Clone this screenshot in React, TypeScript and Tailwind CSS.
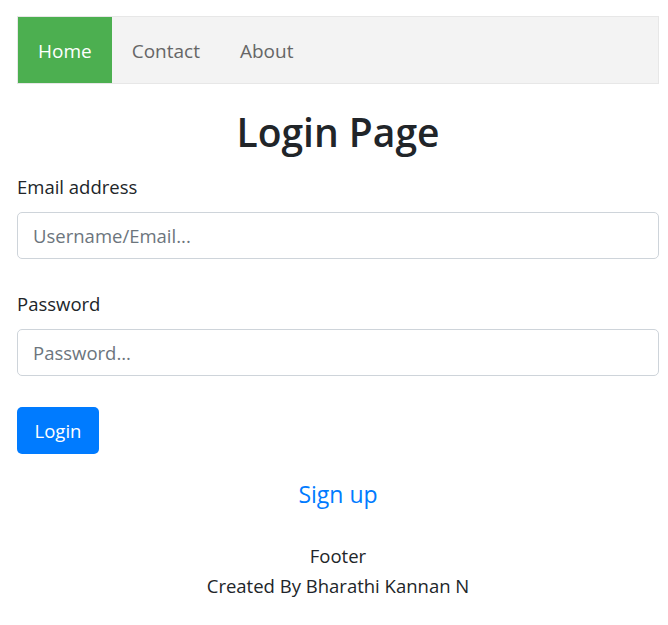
import React from "react";

export default function App() {
  return (
    <div
      className="min-h-[625px] bg-white pl-[17px] pr-[9px] pt-[16px] text-[#212529]"
      style={{ fontFamily: '"Open Sans", "Noto Sans", sans-serif' }}
    >
      <nav className="flex h-[68px] border border-[#e7e7e7] bg-[#f3f3f3]">
        <a className="flex items-center bg-[#4caf50] px-[20px] pt-[2px] text-[19px] text-white">Home</a>
        <a className="flex items-center px-[20px] pt-[2px] text-[19px] text-[#666666]">Contact</a>
        <a className="flex items-center px-[20px] pt-[2px] text-[19px] text-[#666666]">About</a>
      </nav>
      <h1 className="mt-[18px] mb-[10px] h-[60px] text-center text-[39px] leading-[60px] font-semibold">
        Login Page
      </h1>
      <form>
        <label className="mb-[10px] block h-[30px] text-[18.5px] leading-[30px]">Email address</label>
        <input
          className="block h-[47px] w-full rounded-[5px] border border-[#ced4da] px-[15px] text-[18.5px] placeholder:text-[#6c757d]"
          placeholder="Username/Email..."
        />
        <label className="mt-[30px] mb-[10px] block h-[30px] text-[18.5px] leading-[30px]">Password</label>
        <input
          className="block h-[47px] w-full rounded-[5px] border border-[#ced4da] px-[15px] text-[18.5px] placeholder:text-[#6c757d]"
          placeholder="Password..."
        />
        <button
          type="button"
          className="mt-[31px] block h-[47px] w-[82px] rounded-[5px] bg-[#007bff] text-[18.5px] text-white"
        >
          Login
        </button>
      </form>
      <div className="mt-[22px] text-center text-[23px] leading-[36px] text-[#007bff]">Sign up</div>
      <footer className="mt-[29px] text-center text-[18.5px] leading-[30px]">
        <div>Footer</div>
        <div>Created By Bharathi Kannan N</div>
      </footer>
    </div>
  );
}
